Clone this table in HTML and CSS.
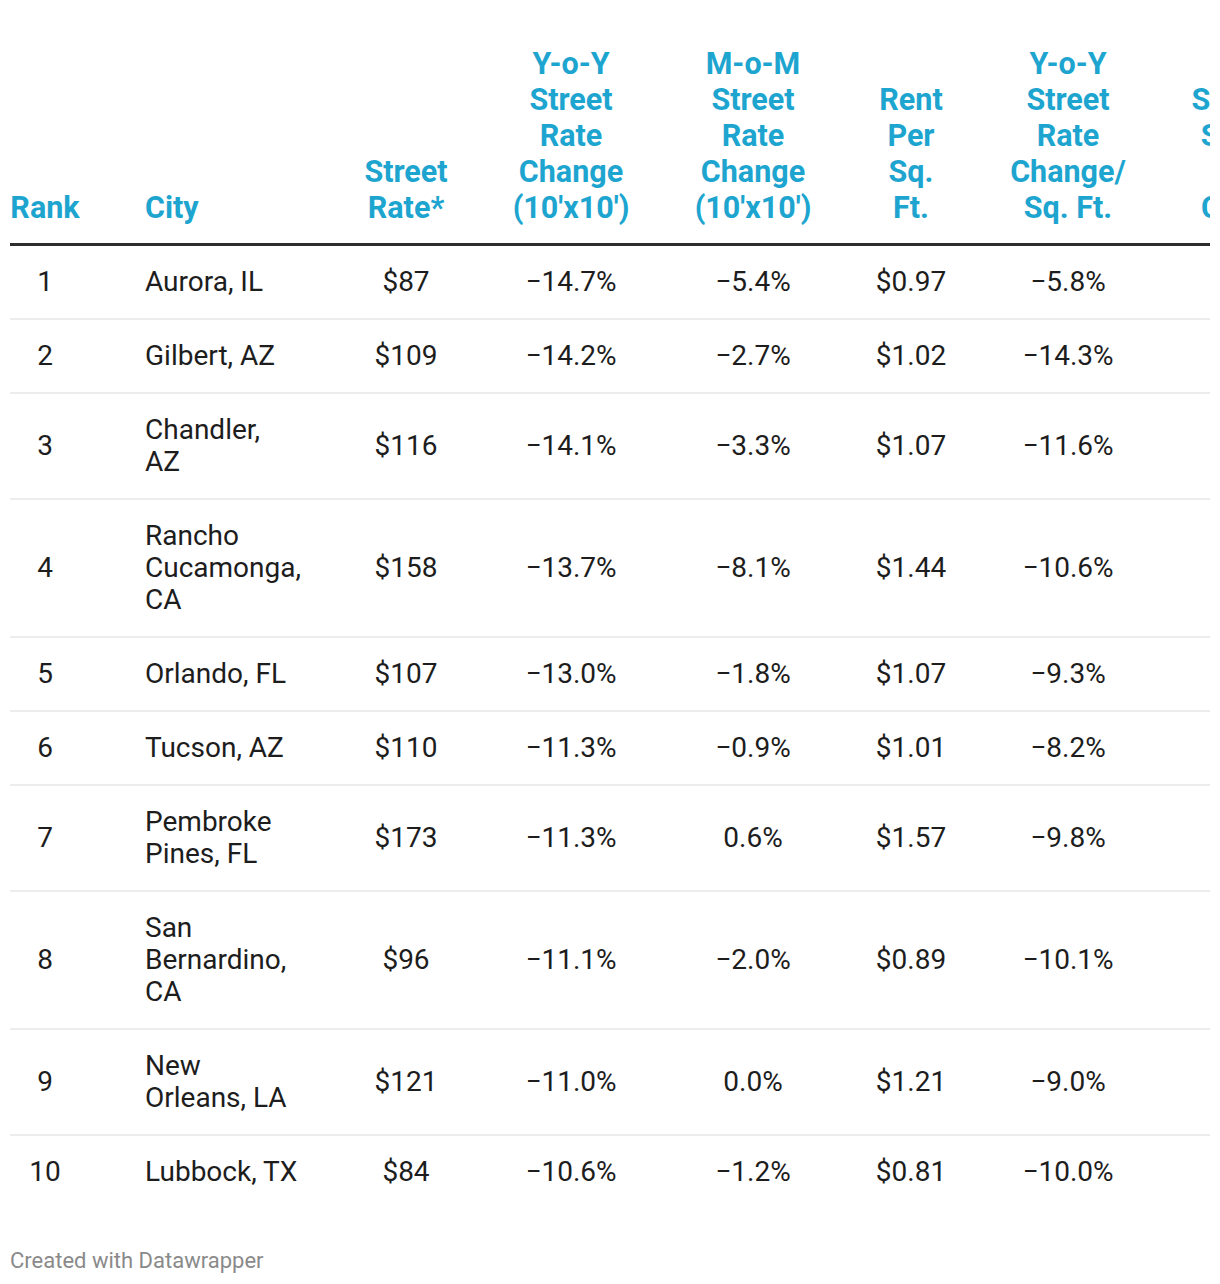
FILE: index.html
```html
<!DOCTYPE html>
<html>
<head>
<meta charset="utf-8">
<link rel="stylesheet" href="styles.css">
</head>
<body>
<div class="chart">
  <table class="data">
    <colgroup>
      <col class="c-rank"><col class="c-city"><col class="c-rate"><col class="c-yoy"><col class="c-mom"><col class="c-rent"><col class="c-yoysq"><col class="c-supply">
    </colgroup>
    <thead>
      <tr>
        <th class="center">Rank</th>
        <th class="left">City</th>
        <th>Street<br>Rate*</th>
        <th>Y-o-Y<br>Street<br>Rate<br>Change<br>(10'x10')</th>
        <th>M-o-M<br>Street<br>Rate<br>Change<br>(10'x10')</th>
        <th>Rent<br>Per<br>Sq.<br>Ft.</th>
        <th>Y-o-Y<br>Street<br>Rate<br>Change/<br>Sq. Ft.</th>
        <th>Storage<br>Sq. Ft.<br>per<br>Capita</th>
      </tr>
    </thead>
    <tbody>
      <tr><td>1</td><td class="left">Aurora, IL</td><td>$87</td><td>−14.7%</td><td>−5.4%</td><td>$0.97</td><td>−5.8%</td><td>7.12</td></tr>
      <tr><td>2</td><td class="left">Gilbert, AZ</td><td>$109</td><td>−14.2%</td><td>−2.7%</td><td>$1.02</td><td>−14.3%</td><td>6.48</td></tr>
      <tr><td>3</td><td class="left">Chandler,<br>AZ</td><td>$116</td><td>−14.1%</td><td>−3.3%</td><td>$1.07</td><td>−11.6%</td><td>6.91</td></tr>
      <tr><td>4</td><td class="left">Rancho<br>Cucamonga,<br>CA</td><td>$158</td><td>−13.7%</td><td>−8.1%</td><td>$1.44</td><td>−10.6%</td><td>7.02</td></tr>
      <tr><td>5</td><td class="left">Orlando, FL</td><td>$107</td><td>−13.0%</td><td>−1.8%</td><td>$1.07</td><td>−9.3%</td><td>7.75</td></tr>
      <tr><td>6</td><td class="left">Tucson, AZ</td><td>$110</td><td>−11.3%</td><td>−0.9%</td><td>$1.01</td><td>−8.2%</td><td>8.34</td></tr>
      <tr><td>7</td><td class="left">Pembroke<br>Pines, FL</td><td>$173</td><td>−11.3%</td><td>0.6%</td><td>$1.57</td><td>−9.8%</td><td>6.66</td></tr>
      <tr><td>8</td><td class="left">San<br>Bernardino,<br>CA</td><td>$96</td><td>−11.1%</td><td>−2.0%</td><td>$0.89</td><td>−10.1%</td><td>7.63</td></tr>
      <tr><td>9</td><td class="left">New<br>Orleans, LA</td><td>$121</td><td>−11.0%</td><td>0.0%</td><td>$1.21</td><td>−9.0%</td><td>6.12</td></tr>
      <tr><td>10</td><td class="left">Lubbock, TX</td><td>$84</td><td>−10.6%</td><td>−1.2%</td><td>$0.81</td><td>−10.0%</td><td>8.01</td></tr>
    </tbody>
  </table>
  <div class="credit">Created with Datawrapper</div>
</div>
</body>
</html>
```

FILE: styles.css
```css
html, body {
  margin: 0;
  padding: 0;
  background: #ffffff;
}

body {
  font-family: Roboto, "Liberation Sans", sans-serif;
  color: #1d1d1d;
  overflow: hidden;
  width: 1220px;
}

.chart {
  width: 1200px;
  margin-left: 10px;
  padding-top: 46px;
  overflow: hidden;
}

.data {
  border-collapse: collapse;
  table-layout: fixed;
  width: 1320px;
}

.c-rank { width: 70px; }
.c-city { width: 250px; }
.c-rate { width: 152px; }
.c-yoy { width: 178px; }
.c-mom { width: 186px; }
.c-rent { width: 130px; }
.c-yoysq { width: 184px; }
.c-supply { width: 170px; }

th {
  font-size: 30.5px;
  font-weight: 700;
  line-height: 36px;
  color: #1da5d0;
  text-align: center;
  vertical-align: bottom;
  padding: 0 0 17px 0;
  border-bottom: 3px solid #2d2d2d;
  white-space: nowrap;
}

td {
  font-size: 28px;
  line-height: 32px;
  text-align: center;
  vertical-align: middle;
  padding: 20px 0 20px 0;
  border-bottom: 2px solid #ededed;
  white-space: nowrap;
}

tbody tr:last-child td {
  border-bottom: none;
}

th.left, td.left {
  text-align: left;
  padding-left: 65px;
}

.credit {
  margin-top: 40px;
  font-size: 22px;
  line-height: 26px;
  color: #8a8a8a;
}
```
